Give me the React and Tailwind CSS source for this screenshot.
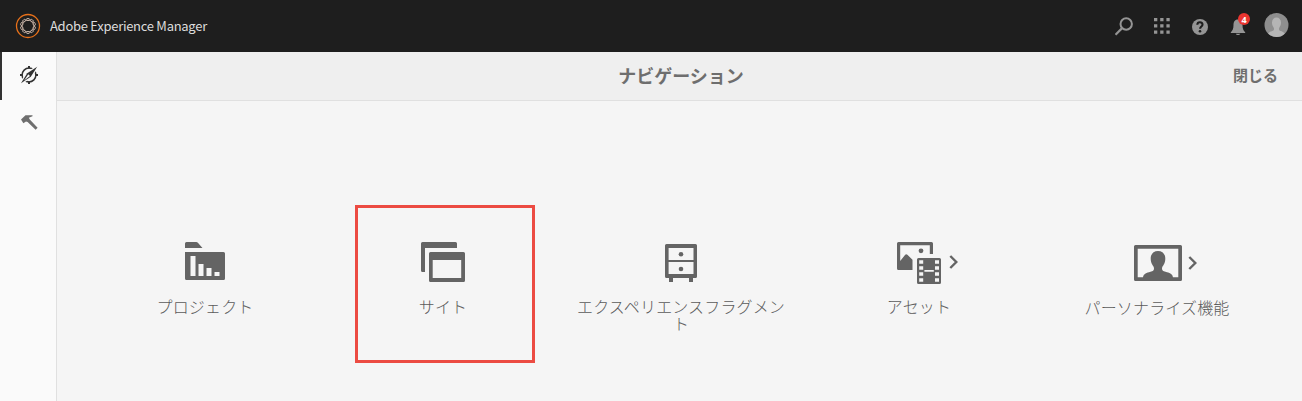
function Chevron({ x, y }) {
  return <path d={`M${x} ${y}l6 6l-6 6`} fill="none" stroke="#646464" strokeWidth="2.4" />;
}

function ProjectIcon() {
  return (
    <svg width="96" height="48" viewBox="157 238 96 48" fill="#646464">
      <path d="M185 243.5q0-1.500 1.500-1.500h9.700q1 0 1.700.8l4.600 5.200H185z" />
      <path fillRule="evenodd" d="M185 252h38.500q1.500 0 1.500 1.500v25q0 1.500-1.500 1.500h-37q-1.500 0-1.500-1.500zM190.500 256v20h5v-20zM198.500 264v12h5v-12zM206.500 268v8h5v-8zM214.500 272v4h5v-4z" />
    </svg>
  );
}

function SitesIcon() {
  return (
    <svg width="96" height="48" viewBox="395 238 96 48" fill="#646464">
      <path d="M421 243.500q0-1.500 1.500-1.500h33q1.500 0 1.500 1.500v4.500h-32v24h-2.500q-1.500 0-1.500-1.500z" />
      <path fillRule="evenodd" d="M430.500 252h33q1.500 0 1.500 1.500v27q0 1.500-1.500 1.500h-33q-1.500 0-1.500-1.500v-27q0-1.500 1.500-1.500zM432.700 260v18h28.500v-18z" />
    </svg>
  );
}

function DrawersIcon() {
  return (
    <svg width="96" height="48" viewBox="633 238 96 48" fill="#646464">
      <path fillRule="evenodd" d="M666.500 244h29q1.500 0 1.500 1.500v31q0 1.500-1.500 1.500h-29q-1.500 0-1.500-1.500v-31q0-1.500 1.500-1.500zM668.600 248v12h24.900v-12zM668.600 262v12h24.900v-12z" />
      <circle cx="681" cy="254.200" r="2.300" />
      <circle cx="681" cy="269" r="2.300" />
      <path d="M669 277h4v5h-4zM689 277h4v5h-4z" />
    </svg>
  );
}

function AssetsIcon() {
  return (
    <svg width="96" height="48" viewBox="871 238 96 48" fill="#646464">
      <path d="M897 243.500q0-1.500 1.500-1.500h33q1.500 0 1.500 1.500v10.500h-3.200v-8.800h-29.600v15.800l5-6.200q1-1.200 2.200 0l5.100 5v10.200h-14q-1.500 0-1.500-1.500z" />
      <circle cx="921" cy="250.800" r="2.400" />
      <path fillRule="evenodd" d="M918.500 258h21q1.500 0 1.500 1.500v23q0 1.500-1.500 1.500h-21q-1.500 0-1.500-1.500v-23q0-1.500 1.500-1.500zM919.200 260.200v3.600h4v-3.600zM919.200 266.200v3.600h4v-3.600zM919.200 272.200v3.600h4v-3.600zM919.200 278.200v3.600h4v-3.600zM935 260.200v3.600h4v-3.600zM935 266.200v3.600h4v-3.600zM935 272.200v3.600h4v-3.600zM935 278.200v3.600h4v-3.600zM924.400 270v1.800h9.400v-1.800z" />
      <Chevron x={950.3} y={256} />
    </svg>
  );
}

function PersonaIcon() {
  return (
    <svg width="96" height="48" viewBox="1109 238 96 48" fill="#646464">
      <path fillRule="evenodd" d="M1135.500 245h45q1.500 0 1.500 1.500v33q0 1.500-1.500 1.500h-45q-1.500 0-1.500-1.500v-33q0-1.500 1.500-1.500zM1137.700 248.700v28.600h40.600v-28.600z" />
      <path d="M1143 278c0-3.500 2.500-4.800 6-5.700 3.500-.9 5-1.500 5-3.500 0-1.800-.8-2.600-1.800-4.300-1-1.700-1.500-3.700-1.500-6 0-4.700 3-7.500 7.300-7.500s7.300 2.800 7.300 7.500c0 2.300-.5 4.300-1.500 6-1 1.700-1.800 2.500-1.800 4.300 0 2 1.500 2.600 5 3.500 3.500.9 6 2.200 6 5.700z" />
      <Chevron x={1189.3} y={257} />
    </svg>
  );
}

const cards = [
  { label: "プロジェクト", Icon: ProjectIcon, gap: "mt-3" },
  { label: "サイト", Icon: SitesIcon, gap: "mt-3", selected: true },
  { label: "エクスペリエンスフラグメント", Icon: DrawersIcon, gap: "mt-3" },
  { label: "アセット", Icon: AssetsIcon, gap: "mt-3" },
  { label: "パーソナライズ機能", Icon: PersonaIcon, gap: "mt-[13px]" },
];

const knots = [0, 36, 72, 108, 144, 180, 216, 252, 288, 324];

function Logo() {
  return (
    <svg width="26" height="26" viewBox="0 0 26 26" fill="none">
      <circle cx="13" cy="13" r="11.500" stroke="#e8711a" strokeWidth="1.300" />
      <circle cx="13" cy="13" r="5.900" stroke="#a39186" strokeWidth=".8" />
      {knots.map((a) => (
        <ellipse key={a} cx="13" cy="6.500" rx="1.700" ry="1.100" stroke="#dcc6b8" strokeWidth=".8" transform={`rotate(${a} 13 13)`} />
      ))}
    </svg>
  );
}

function TopBar() {
  return (
    <header className="flex h-[52px] items-center bg-[#1e1e1e] pl-[15px] pr-3">
      <Logo />
      <span className="ml-[9px] whitespace-nowrap font-['Noto_Sans_CJK_JP',sans-serif] text-[13px] leading-5 tracking-[-0.28px] text-[#dcdcdc]">Adobe Experience Manager</span>
      <div className="ml-auto flex items-center">
        <svg width="20" height="20" viewBox="1114 16.500 20 20" fill="none" stroke="#959595">
          <circle cx="1125.200" cy="24.500" r="5.700" strokeWidth="2" />
          <path d="M1121.100 28.600l-6.600 6.600" strokeWidth="2.200" />
        </svg>
        <svg className="ml-[19px]" width="16" height="16" viewBox="0 0 16 16" fill="#959595">
          <path d="M0 0h3.300v3.300H0zM6.200 0h3.300v3.300H6.200zM12.400 0h3.300v3.300h-3.300zM0 6.200h3.300v3.300H0zM6.200 6.200h3.300v3.300H6.200zM12.400 6.200h3.300v3.300h-3.300zM0 12.400h3.300v3.300H0zM6.200 12.400h3.300v3.300H6.200zM12.400 12.400h3.300v3.300h-3.300z" />
        </svg>
        <svg className="ml-[22px]" width="16" height="18" viewBox="0 0 16 18">
          <circle cx="8" cy="10" r="8" fill="#959595" />
          <path d="M5.300 7.700c.2-3.400 5.400-3.200 5.200 0-.1 1.900-2.400 1.900-2.400 4" fill="none" stroke="#1e1e1e" strokeWidth="2.100" />
          <circle cx="8" cy="14.200" r="1.300" fill="#1e1e1e" />
        </svg>
        <div className="relative ml-[22px] h-4 w-4">
          <svg width="16" height="18" viewBox="1230 19 16 18" fill="#959595">
            <path d="M1238 20.500c-3.500 0-4.500 2.500-4.500 5.500 0 4-1 5.500-2.700 7.300v.7h14.400v-.7c-1.700-1.800-2.700-3.300-2.700-7.300 0-3-1-5.500-4.500-5.500zM1235.800 34.800h4.400c-.3 1.600-4.100 1.600-4.400 0z" />
          </svg>
          <span className="absolute -top-[5px] left-2 flex h-3 w-3 items-center justify-center rounded-full bg-[#ea3530] text-[9px] font-bold leading-none text-white">4</span>
        </div>
        <svg className="mb-0.5 ml-[18px] mr-px" width="25" height="24" viewBox="0 0 25 24">
          <clipPath id="disc"><circle cx="12.500" cy="12" r="12" /></clipPath>
          <g clipPath="url(#disc)">
            <path d="M0 0h25v24H0z" fill="#8e8e8e" />
            <path d="M3.500 24c.2-4 2.200-5.300 4.800-6 2-.6 2-2.300 1.300-3.500-1-1.500-1.600-3-1.600-5 0-3 1.800-5 4.500-5s4.500 2 4.500 5c0 2-.6 3.500-1.600 5-.7 1.200-.7 2.900 1.300 3.500 2.600.7 4.600 2 4.800 6z" fill="#b5b5b5" />
          </g>
        </svg>
      </div>
    </header>
  );
}

function Rail() {
  return (
    <nav className="w-[57px] shrink-0 border-r border-[#e0e0e0] bg-[#fafafa]">
      <div className="flex h-12 items-center border-l-2 border-[#323232] pl-[17px]">
        <svg width="20" height="20" viewBox="19 66 20 20">
          <circle cx="29" cy="75" r="6.900" fill="none" stroke="#323232" strokeWidth="1.500" />
          <path d="M28 66h2v2.500h-2zM28 81.500h2V84h-2zM20 74h2.500v2H20zM35.500 74H38v2h-2.500z" fill="#323232" />
          <path d="M37.200 66.800l-6.400 10-9.800 6.400 6.200-10z" fill="#323232" stroke="#fafafa" strokeWidth="2.400" />
          <path d="M37.200 66.800l-6.400 10-9.800 6.400 6.200-10z" fill="#323232" />
          <path d="M28.300 74.300l1.700 1.700-6 4.500z" fill="#fafafa" />
        </svg>
      </div>
      <div className="flex h-12 items-center pl-[19px]">
        <svg width="20" height="20" viewBox="19 114 20 20" fill="#6e6e6e">
          <path d="M21 119.500l4.500-4.300h7v1l-3.700 1.500 1.200 2 7.600 8-2 2-8-7.800-1.600-.4-2.600 1.700z" />
        </svg>
      </div>
    </nav>
  );
}

export default function App() {
  return (
    <div className="flex h-[401px] w-[1302px] flex-col overflow-hidden bg-[#f5f5f5] font-['Open_Sans','Noto_Sans_CJK_JP',sans-serif]">
      <TopBar />
      <div className="flex min-h-0 flex-1">
        <Rail />
        <main className="flex flex-1 flex-col font-['Noto_Sans_CJK_JP',sans-serif]">
          <div className="grid h-[49px] grid-cols-[1fr_auto_1fr] items-center border-b border-[#e0e0e0] bg-[#efefef] px-6 pb-0.5 font-bold text-[#6e6e6e]">
            <h1 className="col-start-2 pl-[3px] text-[18px] font-bold leading-6">ナビゲーション</h1>
            <button className="justify-self-end text-[15px] leading-6">閉じる</button>
          </div>
          <div className="flex pl-[29px] pt-[104px]">
            {cards.map(({ label, Icon, gap, selected }) => (
              <div key={label} className={selected ? "flex w-[238px] shrink-0 justify-center pl-1" : "flex w-[238px] shrink-0 justify-center"}>
                <div className={selected ? "flex h-[158px] w-[180px] flex-col items-center border-3 border-[#ec4b42] pr-1 pt-[30px]" : "flex h-[158px] w-[228px] flex-col items-center pt-[33px]"}>
                  <Icon />
                  <span className={`${gap} max-w-[230px] text-center text-[16px] font-light leading-[17px] tracking-[0.15px] text-[#5a5a5a]`}>
                    {label.length > 13 ? <>{label.slice(0, 13)}<br />{label.slice(13)}</> : label}
                  </span>
                </div>
              </div>
            ))}
          </div>
        </main>
      </div>
    </div>
  );
}
